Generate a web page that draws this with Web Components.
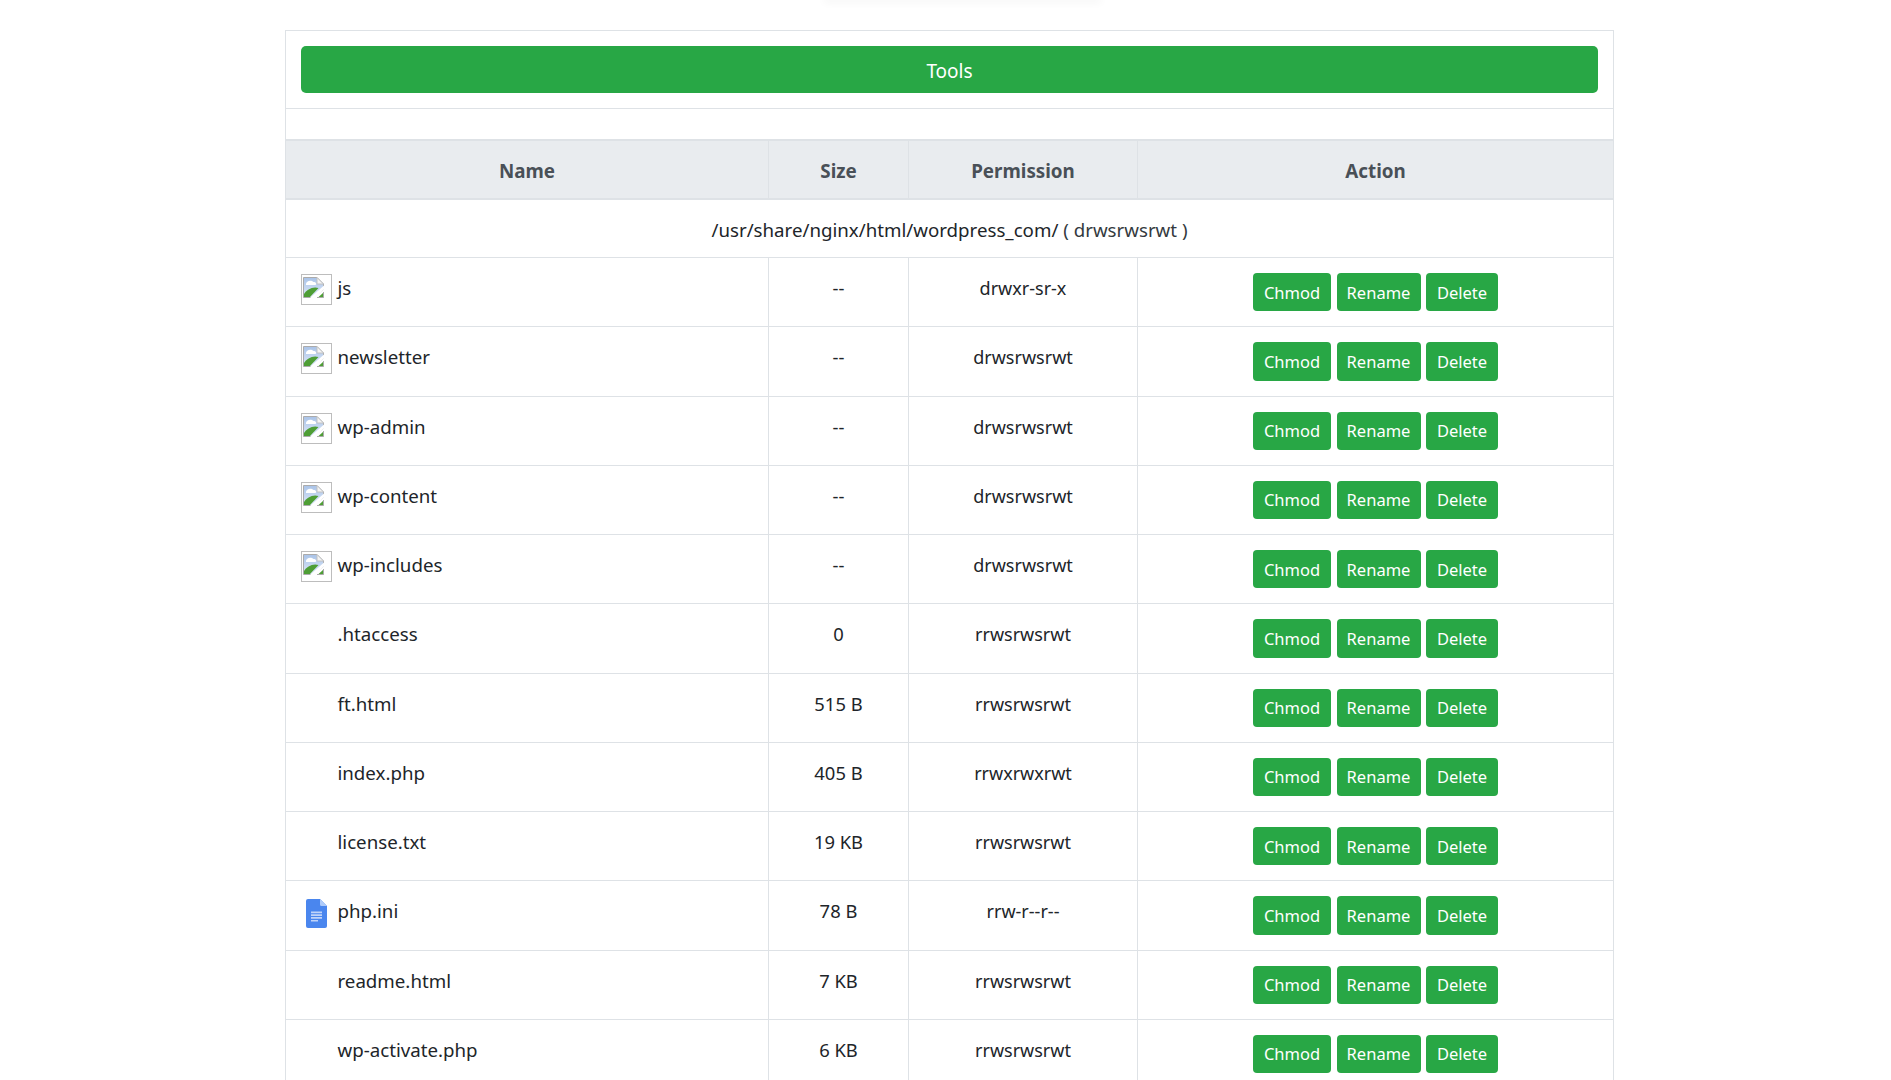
<!DOCTYPE html>
<html>
<head>
<meta charset="utf-8">
<title>File manager</title>
<style>
    html, body { height: 100%; overflow: hidden; }
    body { margin: 0; background: #fff; font-family: "Noto Sans", "Open Sans", sans-serif; color: #212529; }
</style>
</head>
<body>
<file-manager>
    <file-row name="js" size="--" perm="drwxr-sr-x" icon="broken"></file-row>
    <file-row name="newsletter" size="--" perm="drwsrwsrwt" icon="broken"></file-row>
    <file-row name="wp-admin" size="--" perm="drwsrwsrwt" icon="broken"></file-row>
    <file-row name="wp-content" size="--" perm="drwsrwsrwt" icon="broken"></file-row>
    <file-row name="wp-includes" size="--" perm="drwsrwsrwt" icon="broken"></file-row>
    <file-row name=".htaccess" size="0" perm="rrwsrwsrwt"></file-row>
    <file-row name="ft.html" size="515 B" perm="rrwsrwsrwt"></file-row>
    <file-row name="index.php" size="405 B" perm="rrwxrwxrwt"></file-row>
    <file-row name="license.txt" size="19 KB" perm="rrwsrwsrwt"></file-row>
    <file-row name="php.ini" size="78 B" perm="rrw-r--r--" icon="doc"></file-row>
    <file-row name="readme.html" size="7 KB" perm="rrwsrwsrwt"></file-row>
    <file-row name="wp-activate.php" size="6 KB" perm="rrwsrwsrwt"></file-row>
</file-manager>

<script>
class ActionBtn extends HTMLElement {

    constructor() {
        super();
        this.attachShadow({ mode: "open" });
    }

    connectedCallback() {
        this.shadowRoot.innerHTML = `
            <style>
                :host {
                    display: flex;
                    justify-content: center;
                    align-items: center;
                    height: 38.4px;
                    background: #28a745;
                    border-radius: 4px;
                    color: #fff;
                    font-size: 16.5px;
                    cursor: pointer;
                }
            </style>
            <slot></slot>
        `;
    }
}

class BrokenIcon extends HTMLElement {

    constructor() {
        super();
        this.attachShadow({ mode: "open" });
    }

    connectedCallback() {
        this.shadowRoot.innerHTML = `
            <style>
                :host {
                    display: block;
                    box-sizing: border-box;
                    width: 31px;
                    height: 31px;
                    border: 1px solid #bdbdbd;
                    padding: 2px 0 0 1px;
                }
                svg { display: block; }
            </style>
            <svg width="21" height="21" viewBox="0 0 21 21">
                <defs>
                    <linearGradient id="sky" x1="0" y1="0" x2="0" y2="1">
                        <stop offset="0" stop-color="#a9c3e8"/>
                        <stop offset="1" stop-color="#dfe9f8"/>
                    </linearGradient>
                </defs>
                <path d="M.5 .5H14L20.5 7V12L11 20.5H.5Z" fill="url(#sky)" stroke="#ababab"/>
                <path d="M14 .5V7H20.5Z" fill="#f4f4f4" stroke="#c2c2c2"/>
                <path d="M3 7C3 4 8 2.5 10.5 5C13 5 14 7 12.5 8H3Z" fill="#fff"/>
                <path d="M1 20V17C3.5 12.5 10 9 15.5 11L7 20Z" fill="#4e9e35"/>
                <path d="M7 21L21 8.5V12L12 21Z" fill="#fff"/>
                <path d="M15 20.5H20.5V15.5Z" fill="#4e9e35"/>
                <path d="M14 20.5H20.5V15" fill="none" stroke="#ababab"/>
            </svg>
        `;
    }
}

class DocIcon extends HTMLElement {

    constructor() {
        super();
        this.attachShadow({ mode: "open" });
    }

    connectedCallback() {
        this.shadowRoot.innerHTML = `
            <style>
                :host { display: block; width: 31px; height: 31px; padding: 2px 0 0 5px; box-sizing: border-box; }
                svg { display: block; }
            </style>
            <svg width="21" height="29" viewBox="0 0 21 29">
                <path d="M2 0H14L21 7V27A2 2 0 0 1 19 29H2A2 2 0 0 1 0 27V2A2 2 0 0 1 2 0Z" fill="#4a86ee"/>
                <path d="M14 0L21 7H15.5A1.5 1.5 0 0 1 14 5.5Z" fill="#aecbfa"/>
                <path d="M5 12.5H16V14.2H5ZM5 15.3H16V17H5ZM5 18.1H16V19.8H5ZM5 20.9H12V22.6H5Z" fill="#c0d4f9"/>
            </svg>
        `;
    }
}

class FileRow extends HTMLElement {

    constructor() {
        super();
        this.attachShadow({ mode: "open" });
    }

    connectedCallback() {
        this.render();
    }

    style() {
        return `
            :host {
                display: grid;
                grid-template-columns: 482px 140px 229px 1fr;
                box-sizing: border-box;
                height: 69.25px;
                border-top: 1px solid #dee2e6;
            }
            .cell {
                padding-top: 15px;
                line-height: 30px;
                text-align: center;
                border-left: 1px solid #dee2e6;
            }
            .cell.first {
                display: flex;
                align-items: flex-start;
                gap: 5.5px;
                padding-left: 15px;
                text-align: left;
                border-left: 0;
                font-size: 18.7px;
            }
            .cell.size { font-size: 18.4px; }
            .slot { width: 31px; height: 31px; margin-top: 1px; flex: none; }
            .actions {
                display: flex;
                justify-content: center;
                gap: 5.5px;
                padding-top: 15px;
                border-left: 1px solid #dee2e6;
            }
            .chmod { width: 78px; }
            .rename { width: 84px; }
            .delete { width: 72px; }
        `;
    }

    icon() {
        const kind = this.getAttribute("icon");
        if (kind == "broken") return `<broken-icon class="slot"></broken-icon>`;
        if (kind == "doc") return `<doc-icon class="slot"></doc-icon>`;
        return `<div class="slot"></div>`;
    }

    render() {
        this.shadowRoot.innerHTML = `
            <style>${this.style()}</style>
            <div class="cell first">${this.icon()}<span>${this.getAttribute("name")}</span></div>
            <div class="cell size">${this.getAttribute("size")}</div>
            <div class="cell">${this.getAttribute("perm")}</div>
            <div class="actions">
                <action-btn class="chmod">Chmod</action-btn>
                <action-btn class="rename">Rename</action-btn>
                <action-btn class="delete">Delete</action-btn>
            </div>
        `;
    }
}

class FileManager extends HTMLElement {

    constructor() {
        super();
        this.attachShadow({ mode: "open" });
    }

    connectedCallback() {
        this.render();
    }

    style() {
        return `
            :host {
                display: flex;
                flex-direction: column;
                box-sizing: border-box;
                height: 1080px;
                padding: 0 277px 0 285px;
                font-size: 18px;
            }
            .peek {
                flex: none;
                width: 275px;
                height: 0;
                margin: 0 0 30px 540px;
                box-shadow: 0 0 8px 1px rgba(0, 0, 0, .12);
            }
            .card { flex: none; border: 1px solid #dee2e6; border-bottom: 0; height: 1200px; }
            .tools { padding: 15px; border-bottom: 1px solid #dee2e6; }
            .tools-btn {
                display: flex;
                justify-content: center;
                align-items: center;
                height: 47px;
                padding-top: 3px;
                box-sizing: border-box;
                background: #28a745;
                border-radius: 5px;
                color: #fff;
                font-size: 19px;
            }
            .head {
                display: grid;
                grid-template-columns: 482px 140px 229px 1fr;
                height: 61px;
                box-sizing: border-box;
                margin-top: 30px;
                background: #e9ecef;
                border-top: 2px solid #dee2e6;
                border-bottom: 2px solid #dee2e6;
                color: #495057;
                font-weight: 700;
                font-size: 18.8px;
            }
            .head div {
                display: flex;
                justify-content: center;
                align-items: center;
                padding-top: 3px;
                box-sizing: border-box;
                border-left: 1px solid #dee2e6;
            }
            .head div:first-child { border-left: 0; }
            .path {
                display: flex;
                justify-content: center;
                align-items: center;
                height: 57px;
                padding-top: 1px;
                box-sizing: border-box;
                font-size: 18.7px;
            }
            .perm { color: #343a40; }
        `;
    }

    render() {
        this.shadowRoot.innerHTML = `
            <style>${this.style()}</style>
            <div class="peek"></div>
            <section class="card">
                <div class="tools"><div class="tools-btn">Tools</div></div>
                <div class="head">
                    <div>Name</div><div>Size</div><div>Permission</div><div>Action</div>
                </div>
                <div class="path"><span>/usr/share/nginx/html/wordpress_com/ <span class="perm">( drwsrwsrwt )</span></span></div>
                <slot></slot>
            </section>
        `;
    }
}

customElements.define("action-btn", ActionBtn);
customElements.define("broken-icon", BrokenIcon);
customElements.define("doc-icon", DocIcon);
customElements.define("file-row", FileRow);
customElements.define("file-manager", FileManager);
</script>
</body>
</html>
